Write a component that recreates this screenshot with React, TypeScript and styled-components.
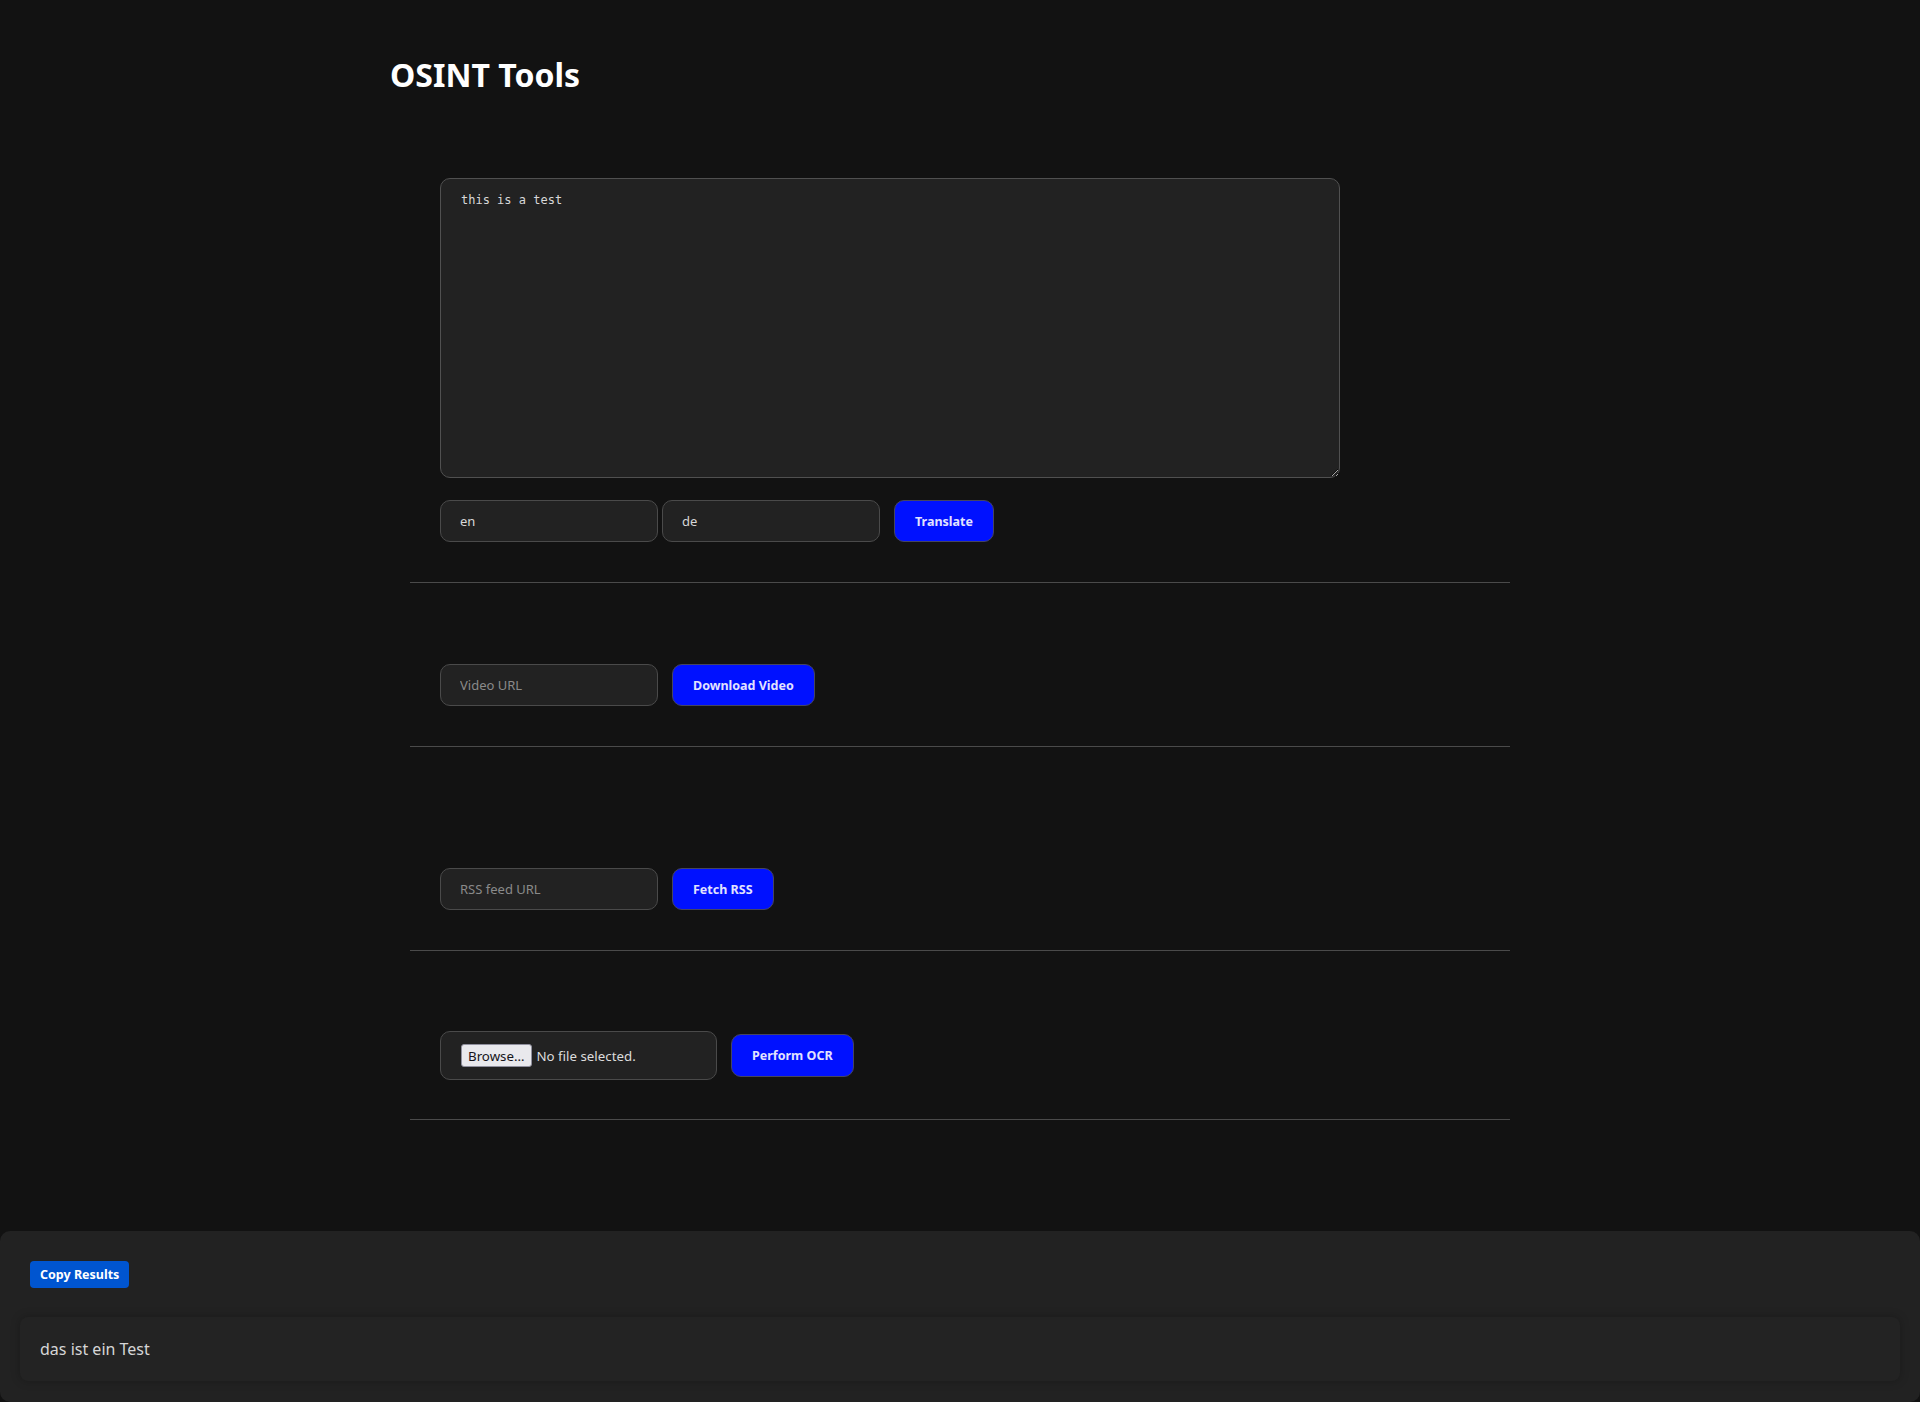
import React from "react";
import styled, { createGlobalStyle } from "styled-components";

const GlobalStyle = createGlobalStyle`
  * { box-sizing: border-box; }
  html, body {
    margin: 0;
    padding: 0;
    background: #121212;
    color: #e0e0e0;
    font-family: "Noto Sans", "Open Sans", sans-serif;
  }
`;

const Page = styled.div`
  min-height: 100vh;
  display: flex;
  flex-direction: column;
`;

const Main = styled.main`
  width: 1140px;
  margin: 0 auto;
`;

const Title = styled.h1`
  margin: 53px 0 0;
  font-size: 32px;
  line-height: 44px;
  font-weight: 700;
  color: #ffffff;
`;

const Section = styled.section<{ $top: number; $bottom?: number }>`
  margin: 0 20px;
  padding: ${(p) => p.$top}px 0 ${(p) => p.$bottom ?? 40}px 30px;
  border-bottom: 1px solid #4a4a4a;
  display: flex;
  flex-direction: column;
  gap: 22px;
`;

const TextArea = styled.textarea`
  display: block;
  width: 900px;
  height: 300px;
  padding: 13px 20px;
  background: #222222;
  color: #d8d8d8;
  border: 1px solid #505050;
  border-radius: 10px;
  font-family: "DejaVu Sans Mono", monospace;
  font-size: 12px;
  line-height: 16px;
  outline: none;
`;

const Row = styled.div`
  display: flex;
  align-items: center;
  gap: 4px;
`;

const Input = styled.input`
  width: 218px;
  height: 42px;
  padding: 0 19px;
  background: #222222;
  color: #d8d8d8;
  border: 1px solid #4a4a4a;
  border-radius: 10px;
  font-family: "Noto Sans", sans-serif;
  font-size: 13px;
  outline: none;
  &::placeholder { color: #8a8a8a; }
`;

const ActionButton = styled.button<{ $h?: number }>`
  height: ${(p) => p.$h ?? 42}px;
  margin-left: 10px;
  padding: 0 20px;
  background: #0011ff;
  color: #e2e2ff;
  border: 1px solid #454560;
  border-radius: 10px;
  font-family: "Noto Sans", sans-serif;
  font-size: 12.5px;
  font-weight: 700;
  cursor: pointer;
`;

const FileBox = styled.label`
  width: 277px;
  height: 49px;
  padding: 0 20px;
  display: flex;
  align-items: center;
  gap: 5px;
  background: #222222;
  border: 1px solid #4a4a4a;
  border-radius: 10px;
  font-family: "Noto Sans", sans-serif;
  font-size: 13.3px;
  color: #dcdcdc;
  cursor: pointer;
  input { display: none; }
`;

const BrowseButton = styled.span`
  height: 23px;
  padding: 0 6px;
  display: inline-flex;
  align-items: center;
  background: #e9e9ed;
  color: #15141a;
  border: 1px solid #8f8f9d;
  border-radius: 3px;
  font-size: 13.3px;
`;

const Panel = styled.footer`
  margin-top: auto;
  height: 171px;
  padding: 20px;
  background: #222222;
  border-radius: 10px;
`;

const CopyButton = styled.button`
  margin: 10px;
  height: 27px;
  padding: 0 10px;
  background: #0055d0;
  color: #ffffff;
  border: none;
  border-radius: 4px;
  font-family: "Noto Sans", sans-serif;
  font-size: 12.5px;
  font-weight: 700;
  cursor: pointer;
`;

const ResultBox = styled.div`
  margin-top: 19px;
  padding: 20px;
  background: #232323;
  border-radius: 8px;
  box-shadow: 0 0 10px rgba(0, 0, 0, 0.25);
  font-size: 16px;
  line-height: 24px;
  color: #d6d6d6;
`;

export default function App() {
  return (
    <Page>
      <GlobalStyle />
      <Main>
        <Title>OSINT Tools</Title>
        <Section $top={81}>
          <TextArea defaultValue="this is a test" />
          <Row>
            <Input defaultValue="en" />
            <Input defaultValue="de" />
            <ActionButton>Translate</ActionButton>
          </Row>
        </Section>
        <Section $top={81}>
          <Row>
            <Input placeholder="Video URL" />
            <ActionButton>Download Video</ActionButton>
          </Row>
        </Section>
        <Section $top={121}>
          <Row>
            <Input placeholder="RSS feed URL" />
            <ActionButton>Fetch RSS</ActionButton>
          </Row>
        </Section>
        <Section $top={80} $bottom={39}>
          <Row>
            <FileBox>
              <input type="file" />
              <BrowseButton>Browse…</BrowseButton>
              <span>No file selected.</span>
            </FileBox>
            <ActionButton $h={43}>Perform OCR</ActionButton>
          </Row>
        </Section>
      </Main>
      <Panel>
        <CopyButton>Copy Results</CopyButton>
        <ResultBox>das ist ein Test</ResultBox>
      </Panel>
    </Page>
  );
}
